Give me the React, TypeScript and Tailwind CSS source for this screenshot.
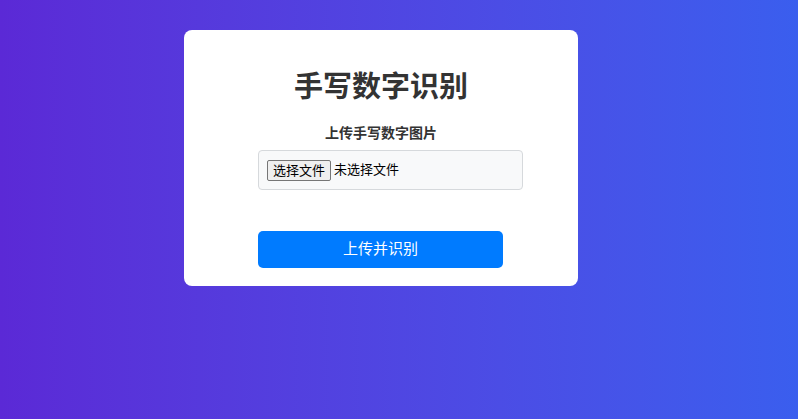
import React from "react";

function App() {
  return (
    <div
      className="min-h-[419px] w-full bg-gradient-to-r from-[#5b29d6] to-[#3a5eee] pt-[30px]"
      style={{ fontFamily: '"Liberation Sans", "Noto Sans CJK SC", sans-serif' }}
    >
      <div className="ml-[184px] flex w-[394px] flex-col items-center rounded-[8px] bg-white pb-[18px] pt-[40px]">
        <h1 className="text-[29px] font-bold leading-[34px] text-[#333333]">
          手写数字识别
        </h1>
        <form className="mt-[19px] flex w-full flex-col pl-[74px]">
          <label className="mr-[74px] text-center text-[14px] font-bold leading-[20px] text-[#333333]">
            上传手写数字图片
          </label>
          <div className="mt-[7px] flex h-[40px] w-[265px] items-center rounded-[4px] border border-[#d6d9dc] bg-[#f8f9fa] pl-[8px]">
            <button
              type="button"
              className="h-[21px] rounded-[2px] border border-[#767676] bg-[#efefef] px-[5px] text-[13px] leading-[19px] text-black"
            >
              选择文件
            </button>
            <span className="ml-[3px] text-[13px] text-black">未选择文件</span>
          </div>
          <button
            type="submit"
            className="mt-[41px] h-[37px] w-[245px] rounded-[5px] bg-[#007bff] text-[15px] text-white"
          >
            上传并识别
          </button>
        </form>
      </div>
    </div>
  );
}

export default App;
